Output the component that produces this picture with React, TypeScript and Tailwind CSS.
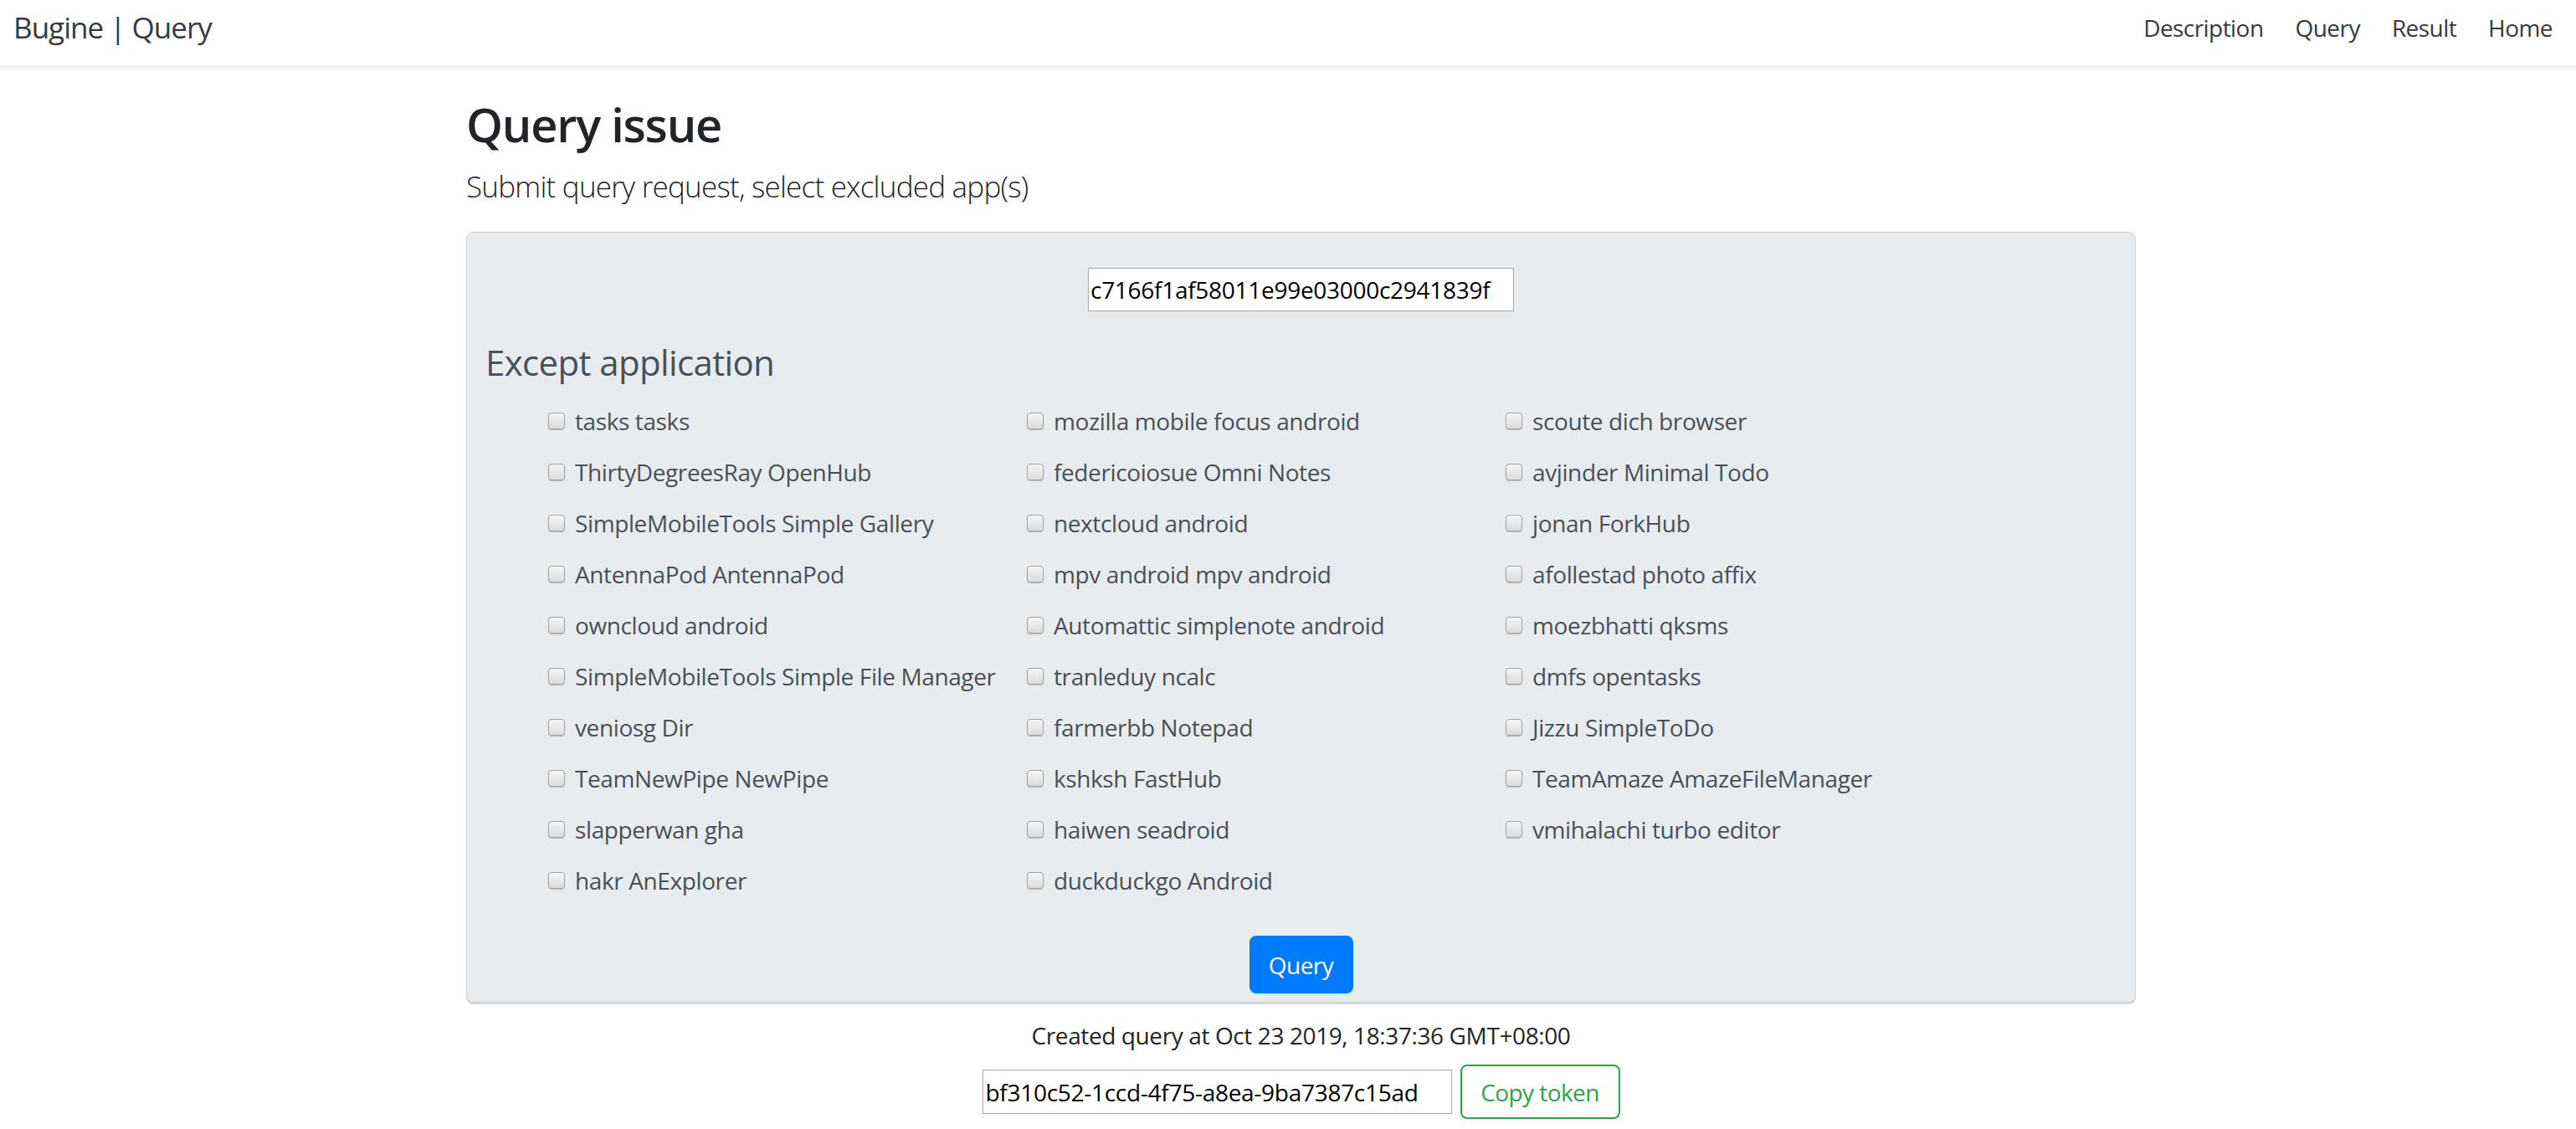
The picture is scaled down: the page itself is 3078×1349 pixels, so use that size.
import React from "react";

const col1 = [
  "tasks tasks",
  "ThirtyDegreesRay OpenHub",
  "SimpleMobileTools Simple Gallery",
  "AntennaPod AntennaPod",
  "owncloud android",
  "SimpleMobileTools Simple File Manager",
  "veniosg Dir",
  "TeamNewPipe NewPipe",
  "slapperwan gha",
  "hakr AnExplorer",
];

const col2 = [
  "mozilla mobile focus android",
  "federicoiosue Omni Notes",
  "nextcloud android",
  "mpv android mpv android",
  "Automattic simplenote android",
  "tranleduy ncalc",
  "farmerbb Notepad",
  "kshksh FastHub",
  "haiwen seadroid",
  "duckduckgo Android",
];

const col3 = [
  "scoute dich browser",
  "avjinder Minimal Todo",
  "jonan ForkHub",
  "afollestad photo affix",
  "moezbhatti qksms",
  "dmfs opentasks",
  "Jizzu SimpleToDo",
  "TeamAmaze AmazeFileManager",
  "vmihalachi turbo editor",
];

const AppCheck = ({ label }: { label: string }) => (
  <label className="flex h-[42px] items-center gap-[12px] text-[28px] leading-[42px] tracking-[-0.014em] text-[#495057]">
    <span className="block h-[20px] w-[20px] shrink-0 rounded-[4px] border border-[#a3a3a3] bg-gradient-to-b from-[#f5f5f5] to-[#dcdcdc] shadow-[0_1px_1px_rgba(0,0,0,0.22)]" />
    <span className="whitespace-nowrap">{label}</span>
  </label>
);

const Column = ({ items }: { items: string[] }) => (
  <div className="flex flex-col gap-[19px]">
    {items.map((a) => (
      <AppCheck key={a} label={a} />
    ))}
  </div>
);

export default function App() {
  return (
    <div className="min-h-[1349px] bg-white font-['Open_Sans','Noto_Sans',sans-serif] text-[#212529]">
      <nav className="flex h-[80px] items-center justify-between border-b border-[#dee2e6] pb-[14px] pl-[16px] pr-[28px] shadow-[0_2px_6px_rgba(0,0,0,0.08)]">
        <a className="text-[35px] leading-[50px] tracking-[-0.028em] text-[#343a40]" href="#">
          Bugine | Query
        </a>
        <div className="flex gap-[38px] text-[28px] tracking-[-0.02em] text-[#343a40]">
          <a href="#">Description</a>
          <a href="#">Query</a>
          <a href="#">Result</a>
          <a href="#">Home</a>
        </div>
      </nav>

      <main className="ml-[557px] w-[1995px]">
        <h2 className="mt-[35px] text-[56px] font-semibold leading-[67px] tracking-[-0.022em]">Query issue</h2>
        <p className="mt-[15px] text-[35px] font-light leading-[52px] tracking-[-0.022em]">
          Submit query request, select excluded app(s)
        </p>

        <div className="mt-[28px] rounded-[8px] border border-[#ced4da] bg-[#e9ecef] px-[22px] pb-[10px] pt-[42px] shadow-[0_2px_0_#d3d8dd]">
          <div className="flex justify-center">
            <input
              className="h-[52px] w-[509px] border border-[#a9a9a9] bg-white px-[2px] text-[28px] tracking-[-0.01em] text-black outline-none"
              defaultValue="c7166f1af58011e99e03000c2941839f"
            />
          </div>

          <h4 className="mt-[36px] text-[42px] leading-[50px] tracking-[-0.015em] text-[#495057]">Except application</h4>

          <div className="ml-[75px] mt-[24px] grid grid-cols-[572px_572px_572px]">
            <Column items={col1} />
            <Column items={col2} />
            <Column items={col3} />
          </div>

          <div className="mt-[45px] flex justify-center">
            <button className="h-[69px] w-[124px] rounded-[8px] bg-[#007bff] text-[28px] tracking-[-0.02em] text-white">
              Query
            </button>
          </div>
        </div>

        <p className="mt-[18px] text-center text-[28px] leading-[42px] tracking-[-0.014em]">
          Created query at Oct 23 2019, 18:37:36 GMT+08:00
        </p>
        <div className="mt-[14px] flex items-center justify-center gap-[10px]">
          <input
            className="h-[53px] w-[561px] border border-[#a9a9a9] bg-white px-[3px] text-[28px] tracking-[-0.01em] text-black outline-none"
            defaultValue="bf310c52-1ccd-4f75-a8ea-9ba7387c15ad"
          />
          <button className="h-[65px] w-[191px] rounded-[8px] border-2 border-[#28a745] text-[28px] tracking-[-0.02em] text-[#28a745]">
            Copy token
          </button>
        </div>
      </main>
    </div>
  );
}
